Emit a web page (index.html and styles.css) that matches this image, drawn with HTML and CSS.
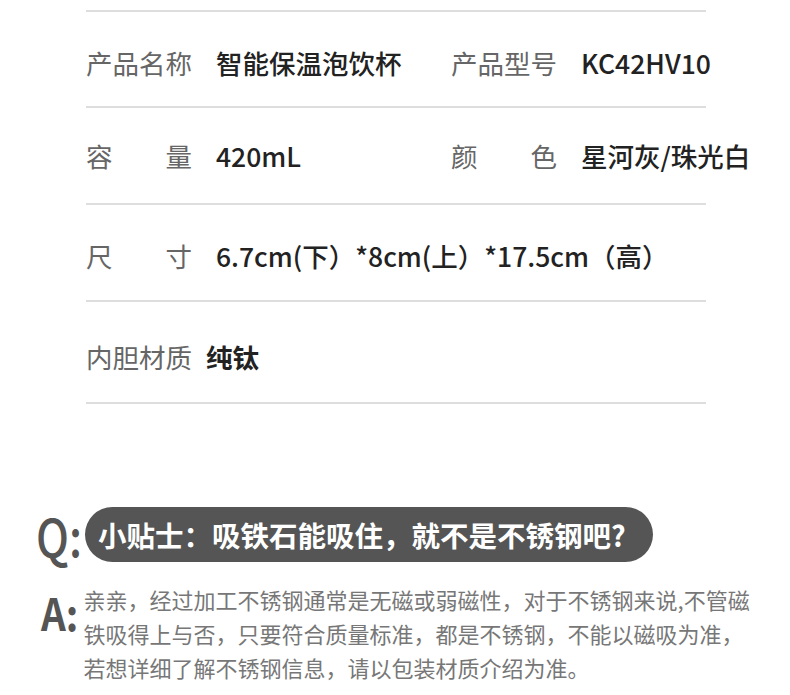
FILE: index.html
```html
<!DOCTYPE html>
<html>

<head>
  <meta charset="utf-8">
  <title>产品参数</title>
  <link rel="stylesheet" href="styles.css">
</head>

<body>
  <div id="spec">
    <div class="row">
      <div class="cell">
        <span class="label">产品名称</span>
        <span class="value">智能保温泡饮杯</span>
      </div>
      <div class="cell">
        <span class="label">产品型号</span>
        <span class="value">KC42HV10</span>
      </div>
    </div>
    <div class="row">
      <div class="cell">
        <span class="label spread"><span>容</span><span>量</span></span>
        <span class="value">420mL</span>
      </div>
      <div class="cell">
        <span class="label spread"><span>颜</span><span>色</span></span>
        <span class="value">星河灰/珠光白</span>
      </div>
    </div>
    <div class="row">
      <div class="cell">
        <span class="label spread"><span>尺</span><span>寸</span></span>
        <span class="value">6.7cm(下）*8cm(上）*17.5cm（高）</span>
      </div>
    </div>
    <div class="row last">
      <div class="cell">
        <span class="label">内胆材质</span>
        <span class="value strong">纯钛</span>
      </div>
    </div>
  </div>

  <div id="faq">
    <div class="question">
      <span class="mark q">Q:</span>
      <span class="pill">小贴士：吸铁石能吸住，就不是不锈钢吧?</span>
    </div>
    <div class="answer">
      <span class="mark a">A:</span>
      <p>亲亲，经过加工不锈钢通常是无磁或弱磁性，对于不锈钢来说,不管磁铁吸得上与否，只要符合质量标准，都是不锈钢，不能以磁吸为准，若想详细了解不锈钢信息，请以包装材质介绍为准。</p>
    </div>
  </div>
</body>

</html>
```

FILE: styles.css
```css
html, body {
  margin: 0;
  padding: 0;
  background: #fff;
  font-family: "Noto Sans CJK SC", "Noto Sans", sans-serif;
}
#spec {
  width: 620px;
  margin: 10px 0 0 86px;
}
#spec .row {
  display: flex;
  align-items: center;
  height: 96px;
  padding-top: 7px;
  border-top: 2px solid #dedede;
  box-sizing: border-box;
}
#spec .row:nth-child(2) {
  height: 97px;
  padding-top: 1px;
}
#spec .row:nth-child(3) {
  height: 97px;
}
#spec .row.last {
  height: 104px;
  padding-top: 9px;
  border-bottom: 2px solid #dedede;
}
#spec .cell {
  display: flex;
  align-items: center;
  flex: 1 1 auto;
  font-size: 26.5px;
  line-height: 36px;
}
#spec .cell:first-child:not(:last-child) {
  flex: 0 0 365px;
}
#spec .label {
  flex: 0 0 106px;
  color: #666;
  white-space: nowrap;
}
#spec .label.spread {
  display: flex;
  justify-content: space-between;
}
#spec .value {
  margin-left: 24px;
  color: #222;
  font-weight: 500;
  white-space: nowrap;
}
#spec .value.strong {
  margin-left: 14px;
  font-weight: 700;
}
#faq {
  margin-top: 103px;
}
#faq .question {
  display: flex;
  align-items: center;
  margin-left: 36px;
}
#faq .mark {
  display: inline-block;
  color: #555;
  line-height: 1;
  transform-origin: left center;
}
#faq .mark.q {
  width: 49px;
  font-size: 52px;
  font-weight: 500;
  transform: scaleX(0.84);
}
#faq .pill {
  display: flex;
  align-items: center;
  width: 568px;
  height: 55px;
  padding-left: 13px;
  box-sizing: border-box;
  border-radius: 28px;
  background: #555;
  color: #fff;
  font-size: 28.5px;
  font-weight: 700;
  white-space: nowrap;
}
#faq .answer {
  display: flex;
  align-items: flex-start;
  margin: 20px 0 0 41px;
}
#faq .mark.a {
  flex: 0 0 42px;
  margin-top: 8px;
  font-size: 44px;
  font-weight: 700;
  transform: scaleX(0.88);
}
#faq .answer p {
  margin: 0;
  width: 680px;
  color: #777;
  font-size: 22px;
  line-height: 34px;
}
```
